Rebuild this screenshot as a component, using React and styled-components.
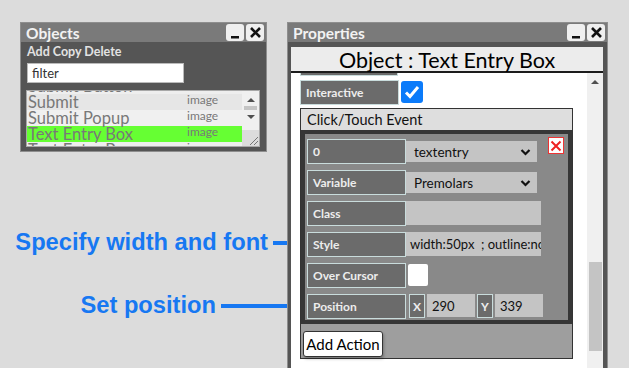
import React from "react";
import styled, { createGlobalStyle } from "styled-components";

const GlobalStyle = createGlobalStyle`
  html, body { margin: 0; padding: 0; }
  body {
    background: #dcdcdc;
    font-family: Lato, "Noto Sans", sans-serif;
    overflow: hidden;
  }
`;

const Page = styled.div`
  display: flex;
  width: 629px;
  height: 368px;
  overflow: hidden;
`;

const LeftColumn = styled.div`
  width: 287px;
  flex-shrink: 0;
  padding: 22px 0 0 20px;
  box-sizing: border-box;
  display: flex;
  flex-direction: column;
`;

const Window = styled.div`
  box-sizing: border-box;
  width: ${(p) => p.$w}px;
  height: ${(p) => p.$h}px;
  margin-top: ${(p) => p.$top || 0}px;
  background: #555;
  border: 1px solid #8e8e8e;
  display: flex;
  flex-direction: column;
  flex-shrink: 0;
`;

const TitleBar = styled.div`
  height: 19px;
  background: #7a7a7a;
  display: flex;
  align-items: center;
  padding: 0 2px 0 5px;
  flex-shrink: 0;
`;

const Title = styled.div`
  flex: 1;
  color: #f2f2f2;
  font-weight: 700;
  font-size: 15.5px;
`;

const WinButton = styled.div`
  width: 18px;
  height: 17px;
  margin-left: 2px;
  background: #efefef;
  border-radius: 3px;
  display: flex;
  align-items: center;
  justify-content: center;
`;

/* ---------- Objects window ---------- */

const ObjectsBody = styled.div`
  flex: 1;
  padding: 3px 4px 0 6px;
  display: flex;
  flex-direction: column;
`;

const ToolLinks = styled.div`
  color: #e2e2e2;
  font-weight: 700;
  font-size: 12.5px;
  line-height: 14px;
`;

const FilterBox = styled.div`
  margin-top: 4px;
  width: 157px;
  height: 20px;
  box-sizing: border-box;
  background: #fff;
  border: 1px solid #bbb;
  color: #333;
  font-size: 13px;
  padding-left: 4px;
  display: flex;
  align-items: center;
`;

const ListBox = styled.div`
  margin: 7px 0 0 -1px;
  width: 234px;
  height: 57px;
  box-sizing: border-box;
  background: #eee;
  border: 1px solid #a8a8a8;
  display: flex;
  overflow: hidden;
`;

const ListRows = styled.div`
  flex: 1;
  overflow: hidden;
`;

const ListRow = styled.div`
  height: 16px;
  line-height: 16px;
  display: flex;
  align-items: center;
  background: ${(p) => p.$bg};
  color: #787878;
  &:first-child { margin-top: -13px; }
`;

const RowName = styled.span`
  width: 159px;
  font-size: 16.5px;
  padding-left: 1px;
  white-space: nowrap;
`;

const RowType = styled.span`
  font-size: 12px;
  margin-top: -5px;
`;

const ListScroll = styled.div`
  width: 17px;
  background: #f0f0f0;
  display: flex;
  flex-direction: column;
  align-items: center;
`;

const Arrow = styled.div`
  width: 0;
  height: 0;
  border-left: 4px solid transparent;
  border-right: 4px solid transparent;
  ${(p) => (p.$down ? "border-top: 4px solid #505050;" : "border-bottom: 4px solid #505050;")}
  margin-top: ${(p) => p.$mt}px;
`;

const SmallThumb = styled.div`
  width: 13px;
  height: 4px;
  background: #c4c4c4;
  margin-top: 4px;
`;

const Grip = styled.div`
  margin-top: auto;
  width: 17px;
  height: 16px;
  background: #dcdcdc;
  display: flex;
  align-items: flex-end;
  justify-content: flex-end;
`;

/* ---------- annotations ---------- */

const Notes = styled.div`
  margin-top: 75px;
  margin-left: -20px;
  display: flex;
  flex-direction: column;
  align-items: flex-end;
  gap: 33px;
`;

const Note = styled.div`
  display: flex;
  align-items: center;
  height: 30px;
`;

const NoteText = styled.span`
  color: #1778f2;
  font-family: "Liberation Sans", Arial, sans-serif;
  font-weight: 700;
  font-size: 23.7px;
`;

const NoteLine = styled.div`
  width: ${(p) => p.$w}px;
  height: 4px;
  margin: 2px 0 0 5px;
  background: #1778f2;
`;

/* ---------- Properties window ---------- */

const PropsBody = styled.div`
  flex: 1;
  padding: 5px 4px 0 3px;
  display: flex;
  flex-direction: column;
  min-height: 0;
`;

const ObjectHeader = styled.div`
  height: 24px;
  background: #ececec;
  border-bottom: 2px solid #1c1c1c;
  text-align: center;
  font-size: 21.5px;
  line-height: 26px;
  color: #000;
  flex-shrink: 0;
`;

const PropsArea = styled.div`
  flex: 1;
  display: flex;
  background: #fff;
  min-height: 0;
`;

const PropsContent = styled.div`
  flex: 1;
  padding-left: 9px;
  overflow: hidden;
`;

const PropsScroll = styled.div`
  width: 16px;
  background: #f0f0f0;
  display: flex;
  flex-direction: column;
  align-items: center;
`;

const BigThumb = styled.div`
  width: 13px;
  height: 89px;
  margin-top: 178px;
  background: #c4c4c4;
`;

const Label = styled.div`
  box-sizing: border-box;
  width: ${(p) => p.$w || 99}px;
  height: ${(p) => p.$h || 25}px;
  background: #6b6b6b;
  border: 1px solid #c9dcdc;
  color: #ededed;
  font-weight: 700;
  font-size: 12px;
  display: flex;
  align-items: center;
  justify-content: ${(p) => (p.$center ? "center" : "flex-start")};
  padding-left: ${(p) => (p.$center ? 0 : 5)}px;
  flex-shrink: 0;
`;

const CutLabel = styled(Label)`
  height: 3px;
  border-top: none;
  width: 98px;
`;

const PropRow = styled.div`
  display: flex;
  align-items: flex-start;
  margin-top: 4px;
`;

const Checkbox = styled.div`
  width: 22px;
  height: 22px;
  margin: 1px 0 0 2px;
  border-radius: 3px;
  background: #0b7bfa;
  display: flex;
  align-items: center;
  justify-content: center;
`;

const Section = styled.div`
  margin-top: 3px;
  width: 273px;
  box-sizing: border-box;
  border: 1px solid #333;
  border-top: none;
`;

const SectionHeader = styled.div`
  height: 21px;
  background: #dedede;
  border-top: 1px solid #333;
  color: #111;
  font-size: 14.5px;
  padding-left: 6px;
  display: flex;
  align-items: center;
`;

const EventBox = styled.div`
  position: relative;
  border: 4px solid #363636;
  background: #898989;
  padding: 5px 0 1px 2px;
  display: flex;
  flex-direction: column;
  gap: 6px;
`;

const DeleteButton = styled.div`
  position: absolute;
  top: 3px;
  right: 4px;
  width: 16px;
  height: 17px;
  box-sizing: border-box;
  background: #fff;
  border: 1px solid #e33;
  display: flex;
  align-items: center;
  justify-content: center;
`;

const FieldRow = styled.div`
  display: flex;
  align-items: flex-start;
  height: 25px;
`;

const SelectBox = styled.div`
  width: 131px;
  height: 21px;
  margin-top: 2px;
  box-sizing: border-box;
  background: #c4c4c4;
  color: #111;
  font-size: 13.5px;
  padding: 0 6px 0 8px;
  display: flex;
  align-items: center;
  justify-content: space-between;
`;

const TextField = styled.div`
  width: ${(p) => p.$w || 135}px;
  height: ${(p) => p.$h || 24}px;
  background: #c4c4c4;
  color: #111;
  font-size: 13px;
  padding-left: ${(p) => p.$pl || 4}px;
  box-sizing: border-box;
  display: flex;
  align-items: center;
  white-space: nowrap;
  overflow: hidden;
`;

const CursorSwatch = styled.div`
  width: 20px;
  height: 22px;
  margin: 1px 0 0 2px;
  background: #fff;
  border-radius: 2px;
`;

const CoordGroup = styled.div`
  display: flex;
  margin-left: 3px;
  gap: 2px;
`;

const Footer = styled.div`
  height: 34px;
  background: #9e9e9e;
  padding: 7px 0 0 2px;
  box-sizing: border-box;
`;

const AddButton = styled.div`
  display: inline-flex;
  align-items: center;
  justify-content: center;
  width: 80px;
  height: 26px;
  box-sizing: border-box;
  background: #fff;
  border: 1px solid #333;
  border-radius: 3px;
  color: #000;
  font-size: 15px;
  box-shadow: 1px 2px 3px rgba(0, 0, 0, 0.25);
`;

const MinIcon = () => (
  <svg width="12" height="12" viewBox="0 0 12 12">
    <rect x="2" y="9" width="8" height="2.5" fill="#111" />
  </svg>
);

const CloseIcon = () => (
  <svg width="13" height="13" viewBox="0 0 13 13">
    <path d="M2 2 L11 11 M11 2 L2 11" stroke="#111" strokeWidth="2.6" />
  </svg>
);

const Chevron = () => (
  <svg width="11" height="8" viewBox="0 0 11 8">
    <path d="M1.5 2 L5.5 6 L9.5 2" stroke="#111" strokeWidth="2.2" fill="none" />
  </svg>
);

const WindowButtons = () => (
  <>
    <WinButton><MinIcon /></WinButton>
    <WinButton><CloseIcon /></WinButton>
  </>
);

const objects = [
  { name: "Submit Button", bg: "#eee" },
  { name: "Submit", bg: "#e6e6e6" },
  { name: "Submit Popup", bg: "#f0f0f0" },
  { name: "Text Entry Box", bg: "#66ff33" },
  { name: "Text Entry Box", bg: "#eee" },
];

export default function App() {
  return (
    <Page>
      <GlobalStyle />
      <LeftColumn>
        <Window $w={247} $h={130}>
          <TitleBar>
            <Title>Objects</Title>
            <WindowButtons />
          </TitleBar>
          <ObjectsBody>
            <ToolLinks>Add Copy Delete</ToolLinks>
            <FilterBox>filter</FilterBox>
            <ListBox>
              <ListRows>
                {objects.map((o, i) => (
                  <ListRow key={i} $bg={o.bg}>
                    <RowName>{o.name}</RowName>
                    <RowType>image</RowType>
                  </ListRow>
                ))}
              </ListRows>
              <ListScroll>
                <Arrow $mt={7} />
                <SmallThumb />
                <Arrow $down $mt={5} />
                <Grip>
                  <svg width="11" height="11" viewBox="0 0 11 11">
                    <path d="M2 10 L10 2 M6 10 L10 6" stroke="#777" strokeWidth="1" />
                  </svg>
                </Grip>
              </ListScroll>
            </ListBox>
          </ObjectsBody>
        </Window>

        <Notes>
          <Note>
            <NoteText>Specify width and font</NoteText>
            <NoteLine $w={14} />
          </Note>
          <Note>
            <NoteText>Set position</NoteText>
            <NoteLine $w={66} />
          </Note>
        </Notes>
      </LeftColumn>

      <Window $w={321} $h={368} $top={22}>
        <TitleBar>
          <Title>Properties</Title>
          <WindowButtons />
        </TitleBar>
        <PropsBody>
          <ObjectHeader>Object : Text Entry Box</ObjectHeader>
          <PropsArea>
            <PropsContent>
              <CutLabel />
              <PropRow>
                <Label>Interactive</Label>
                <Checkbox>
                  <svg width="16" height="14" viewBox="0 0 16 14">
                    <path d="M2 7.5 L6 11.5 L14 2" stroke="#fff" strokeWidth="3" fill="none" />
                  </svg>
                </Checkbox>
              </PropRow>
              <Section>
                <SectionHeader>Click/Touch Event</SectionHeader>
                <EventBox>
                  <DeleteButton>
                    <svg width="12" height="12" viewBox="0 0 12 12">
                      <path d="M1.5 1.5 L10.5 10.5 M10.5 1.5 L1.5 10.5" stroke="#e22" strokeWidth="2" />
                    </svg>
                  </DeleteButton>
                  <FieldRow>
                    <Label>0</Label>
                    <SelectBox>textentry<Chevron /></SelectBox>
                  </FieldRow>
                  <FieldRow>
                    <Label>Variable</Label>
                    <SelectBox>Premolars<Chevron /></SelectBox>
                  </FieldRow>
                  <FieldRow>
                    <Label>Class</Label>
                    <TextField />
                  </FieldRow>
                  <FieldRow>
                    <Label>Style</Label>
                    <TextField>width:50px&nbsp; ; outline:none</TextField>
                  </FieldRow>
                  <FieldRow>
                    <Label>Over Cursor</Label>
                    <CursorSwatch />
                  </FieldRow>
                  <FieldRow>
                    <Label>Position</Label>
                    <CoordGroup>
                      <Label $w={16} $h={24} $center>X</Label>
                      <TextField $w={48} $h={23} $pl={5}>290</TextField>
                      <Label $w={16} $h={24} $center>Y</Label>
                      <TextField $w={48} $h={23} $pl={5}>339</TextField>
                    </CoordGroup>
                  </FieldRow>
                </EventBox>
                <Footer>
                  <AddButton>Add Action</AddButton>
                </Footer>
              </Section>
            </PropsContent>
            <PropsScroll>
              <Arrow $mt={7} />
              <BigThumb />
            </PropsScroll>
          </PropsArea>
        </PropsBody>
      </Window>
    </Page>
  );
}
